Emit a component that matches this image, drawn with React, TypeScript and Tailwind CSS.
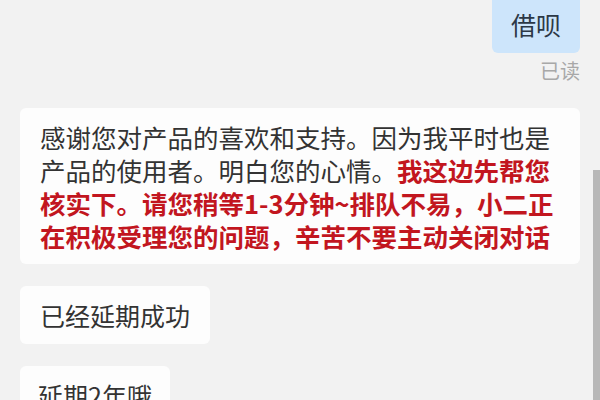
const App = () => {
  return (
    <div className="relative h-[400px] w-[600px] overflow-hidden bg-[#f2f2f2] font-['Noto_Sans_CJK_SC',sans-serif] text-[#333333]">
      {/* my message */}
      <div className="flex flex-col items-end pr-5">
        <div className="rounded-b-md bg-[#cde5fb] px-[19px] pt-2 pb-3 text-[25px] leading-[33px] text-[#2c3846]">
          借呗
        </div>
        <div className="mt-[6px] text-[20px] leading-[24px] text-[#a8a8a8]">已读</div>
      </div>

      {/* replies */}
      <div className="mt-[25px] flex flex-col items-start gap-[22px] px-5">
        <div className="self-stretch whitespace-nowrap rounded-md bg-[#fdfdfd] px-5 py-[12px] text-[25.5px] leading-[33px]">
          感谢您对产品的喜欢和支持。因为我平时也是
          <br />
          产品的使用者。明白您的心情。
          <span className="font-bold text-[#c2161f]">
            我这边先帮您
            <br />
            核实下。请您稍等1-3分钟~排队不易，小二正
            <br />
            在积极受理您的问题，辛苦不要主动关闭对话
          </span>
        </div>
        <div className="rounded-md bg-[#fdfdfd] px-5 py-[12px] text-[25px] leading-[34px]">
          已经延期成功
        </div>
        <div className="rounded-md bg-[#fdfdfd] px-[18px] py-[12px] text-[25px] leading-[34px]">
          延期2年哦
        </div>
      </div>

      {/* scroll indicator */}
      <div className="absolute right-0 top-[170px] bottom-0 w-[7px] bg-[#b8b8b8]" />
    </div>
  );
};

export default App;
